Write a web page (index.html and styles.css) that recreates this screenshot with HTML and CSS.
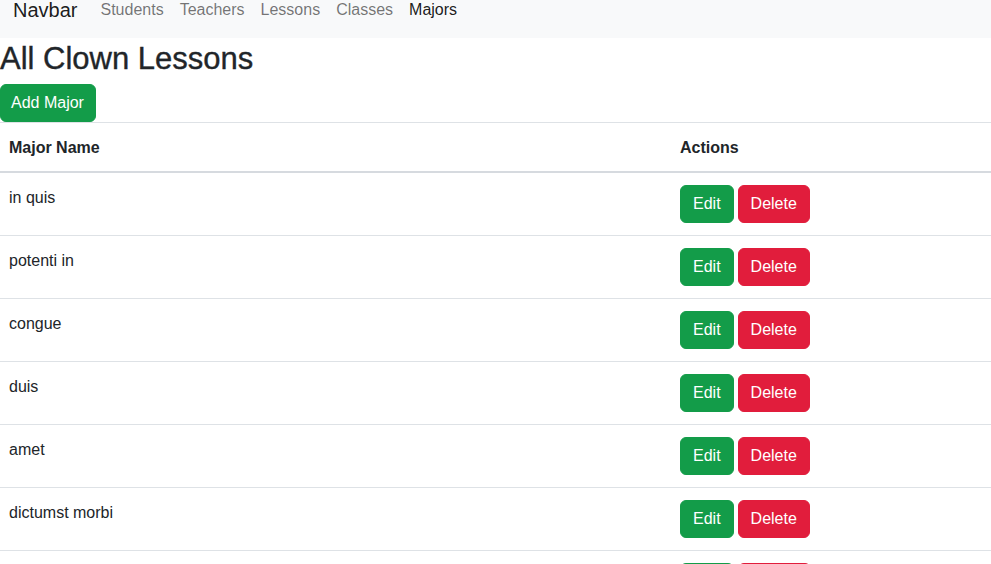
FILE: index.html
```html
<!DOCTYPE html>
<html lang="en">
<head>
<meta charset="utf-8">
<title>Majors</title>
<link rel="stylesheet" href="styles.css">
</head>
<body>
<nav class="navbar">
  <a class="brand" href="#">Navbar</a>
  <ul class="nav">
    <li><a class="nav-link" href="#">Students</a></li>
    <li><a class="nav-link" href="#">Teachers</a></li>
    <li><a class="nav-link" href="#">Lessons</a></li>
    <li><a class="nav-link" href="#">Classes</a></li>
    <li><a class="nav-link active" href="#">Majors</a></li>
  </ul>
</nav>
<main>
  <h1 class="title">All Clown Lessons</h1>
  <div class="toolbar"><button class="btn btn-success btn-add">Add Major</button></div>
  <table class="table">
    <thead>
      <tr><th class="col-name">Major Name</th><th>Actions</th></tr>
    </thead>
    <tbody>
      <tr><td>in quis</td><td><div class="actions"><button class="btn btn-success">Edit</button><button class="btn btn-danger">Delete</button></div></td></tr>
      <tr><td>potenti in</td><td><div class="actions"><button class="btn btn-success">Edit</button><button class="btn btn-danger">Delete</button></div></td></tr>
      <tr><td>congue</td><td><div class="actions"><button class="btn btn-success">Edit</button><button class="btn btn-danger">Delete</button></div></td></tr>
      <tr><td>duis</td><td><div class="actions"><button class="btn btn-success">Edit</button><button class="btn btn-danger">Delete</button></div></td></tr>
      <tr><td>amet</td><td><div class="actions"><button class="btn btn-success">Edit</button><button class="btn btn-danger">Delete</button></div></td></tr>
      <tr><td>dictumst morbi</td><td><div class="actions"><button class="btn btn-success">Edit</button><button class="btn btn-danger">Delete</button></div></td></tr>
      <tr class="row-peek"><td></td><td><div class="actions"><span class="btn btn-success btn-stub"></span><span class="btn btn-danger btn-stub btn-stub-wide"></span></div></td></tr>
    </tbody>
  </table>
</main>
</body>
</html>
```
FILE: styles.css
```css
* { box-sizing: border-box; }
html, body { margin: 0; padding: 0; }
body {
  font-family: "Liberation Sans", Arial, sans-serif;
  font-size: 16px;
  line-height: 24px;
  color: #212529;
  background: #fff;
  overflow: hidden;
}
.navbar {
  display: flex;
  align-items: flex-start;
  height: 38px;
  padding: 0 12px 0 13px;
  background: #f8f9fa;
}
.brand {
  font-size: 20px;
  line-height: 20px;
  color: rgba(0,0,0,0.9);
  text-decoration: none;
  margin-right: 15px;
}
.nav {
  display: flex;
  list-style: none;
  margin: 0;
  padding: 0;
}
.nav-link {
  display: block;
  padding: 0 8px;
  line-height: 20px;
  font-size: 16px;
  color: rgba(0,0,0,0.55);
  text-decoration: none;
}
.nav-link.active { color: rgba(0,0,0,0.9); }
.title {
  margin: 0 0 6px;
  padding-top: 2px;
  font-size: 31px;
  line-height: 38px;
  font-weight: 500;
  -webkit-text-stroke: 0.35px #212529;
}
.toolbar { display: flex; }
.btn {
  display: inline-block;
  font-family: inherit;
  font-size: 16px;
  line-height: 24px;
  padding: 6px 12px;
  border: 1px solid transparent;
  border-radius: 6px;
  color: #fff;
  cursor: pointer;
}
.btn-add { padding: 6px 11px 6px 10px; }
.btn-success { background: #139c49; border-color: #139c49; }
.btn-danger { background: #e11d3c; border-color: #e11d3c; }
.btn-stub { width: 54px; height: 38px; }
.btn-stub-wide { width: 73px; }
.table {
  width: 100%;
  border-collapse: collapse;
  margin: 0;
}
.table th, .table td {
  text-align: left;
  vertical-align: top;
  padding: 13px 8px 11px 9px;
  border-bottom: 1px solid #dee2e6;
}
.table th + th { padding-left: 8px; }
.table td + td { padding: 12px 8px; }
.table thead tr { border-top: 1px solid #dee2e6; }
.table thead th { border-bottom: 2px solid #d6dadf; font-weight: 700; }
.col-name { width: 672px; }
.actions { display: flex; gap: 4px; }
```
